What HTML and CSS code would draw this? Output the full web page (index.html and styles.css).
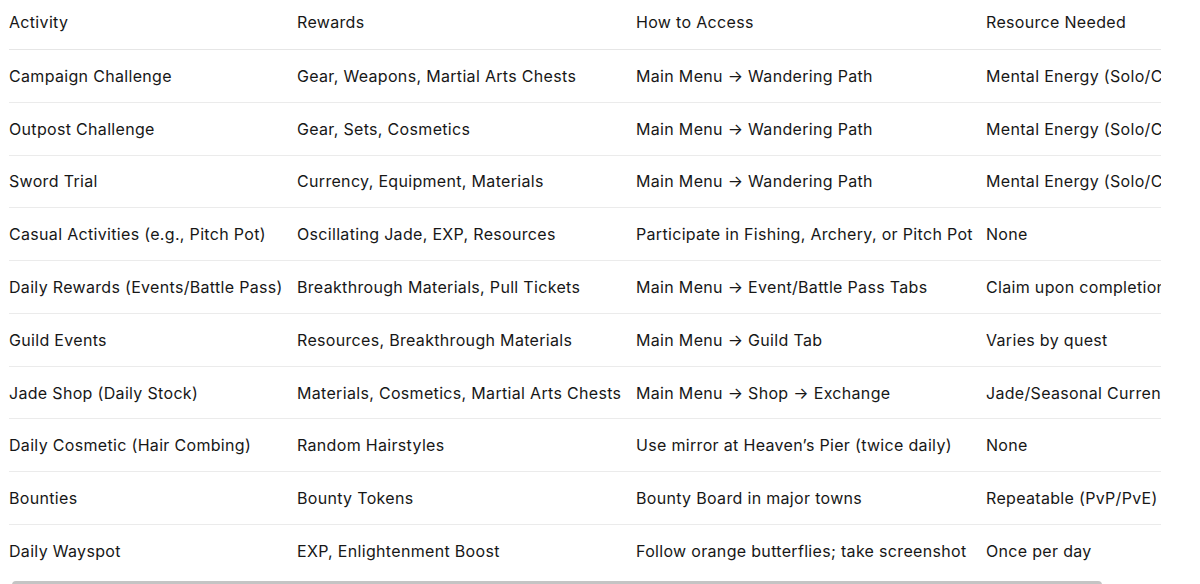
FILE: index.html
```html
<!DOCTYPE html>
<html lang="en">
<head>
<meta charset="utf-8">
<title>Activities</title>
<link rel="stylesheet" href="styles.css">
</head>
<body>
<div class="page">
  <div class="scroller">
    <table class="grid">
      <colgroup>
        <col class="c1"><col class="c2"><col class="c3"><col class="c4">
      </colgroup>
      <thead>
        <tr><th>Activity</th><th>Rewards</th><th>How to Access</th><th>Resource Needed</th></tr>
      </thead>
      <tbody>
        <tr><td>Campaign Challenge</td><td>Gear, Weapons, Martial Arts Chests</td><td>Main Menu → Wandering Path</td><td>Mental Energy (Solo/Co-op)</td></tr>
        <tr><td>Outpost Challenge</td><td>Gear, Sets, Cosmetics</td><td>Main Menu → Wandering Path</td><td>Mental Energy (Solo/Co-op)</td></tr>
        <tr><td>Sword Trial</td><td>Currency, Equipment, Materials</td><td>Main Menu → Wandering Path</td><td>Mental Energy (Solo/Co-op)</td></tr>
        <tr><td>Casual Activities (e.g., Pitch Pot)</td><td>Oscillating Jade, EXP, Resources</td><td>Participate in Fishing, Archery, or Pitch Pot</td><td>None</td></tr>
        <tr><td>Daily Rewards (Events/Battle Pass)</td><td>Breakthrough Materials, Pull Tickets</td><td>Main Menu → Event/Battle Pass Tabs</td><td>Claim upon completion</td></tr>
        <tr><td>Guild Events</td><td>Resources, Breakthrough Materials</td><td>Main Menu → Guild Tab</td><td>Varies by quest</td></tr>
        <tr><td>Jade Shop (Daily Stock)</td><td>Materials, Cosmetics, Martial Arts Chests</td><td>Main Menu → Shop → Exchange</td><td>Jade/Seasonal Currency</td></tr>
        <tr><td>Daily Cosmetic (Hair Combing)</td><td>Random Hairstyles</td><td>Use mirror at Heaven’s Pier (twice daily)</td><td>None</td></tr>
        <tr><td>Bounties</td><td>Bounty Tokens</td><td>Bounty Board in major towns</td><td>Repeatable (PvP/PvE)</td></tr>
        <tr><td>Daily Wayspot</td><td>EXP, Enlightenment Boost</td><td>Follow orange butterflies; take screenshot</td><td>Once per day</td></tr>
      </tbody>
    </table>
  </div>
  <div class="track"><div class="thumb"></div></div>
</div>
</body>
</html>
```

FILE: styles.css
```css
html, body {
  margin: 0;
  padding: 0;
  background: #ffffff;
  overflow: hidden;
}

.page {
  padding-left: 9px;
  font-family: Inter, "Liberation Sans", sans-serif;
  font-size: 16px;
  letter-spacing: 0.32px;
  color: #171717;
}

.scroller {
  width: 1152px;
  overflow: hidden;
}

.grid {
  border-collapse: collapse;
  table-layout: fixed;
  width: 1215px;
}

.c1 { width: 288px; }
.c2 { width: 339px; }
.c3 { width: 350px; }
.c4 { width: 238px; }

.grid th,
.grid td {
  text-align: left;
  font-weight: 400;
  line-height: 24px;
  white-space: nowrap;
  overflow: hidden;
  padding: 0;
}

.grid th {
  padding-top: 10px;
  padding-bottom: 15px;
}

.grid thead tr {
  border-bottom: 1px solid #e6e6e6;
}

.grid td {
  padding-top: 13.9px;
  padding-bottom: 13.9px;
}

.grid tbody tr {
  border-bottom: 1px solid #ebebeb;
}

.grid tbody tr:last-child {
  border-bottom: 0;
}

.track {
  width: 1152px;
  height: 12px;
  padding: 4px 0 0 3px;
  box-sizing: border-box;
}

.thumb {
  width: 1090px;
  height: 8px;
  border-radius: 4px;
  background: #c4c4c4;
}
```
